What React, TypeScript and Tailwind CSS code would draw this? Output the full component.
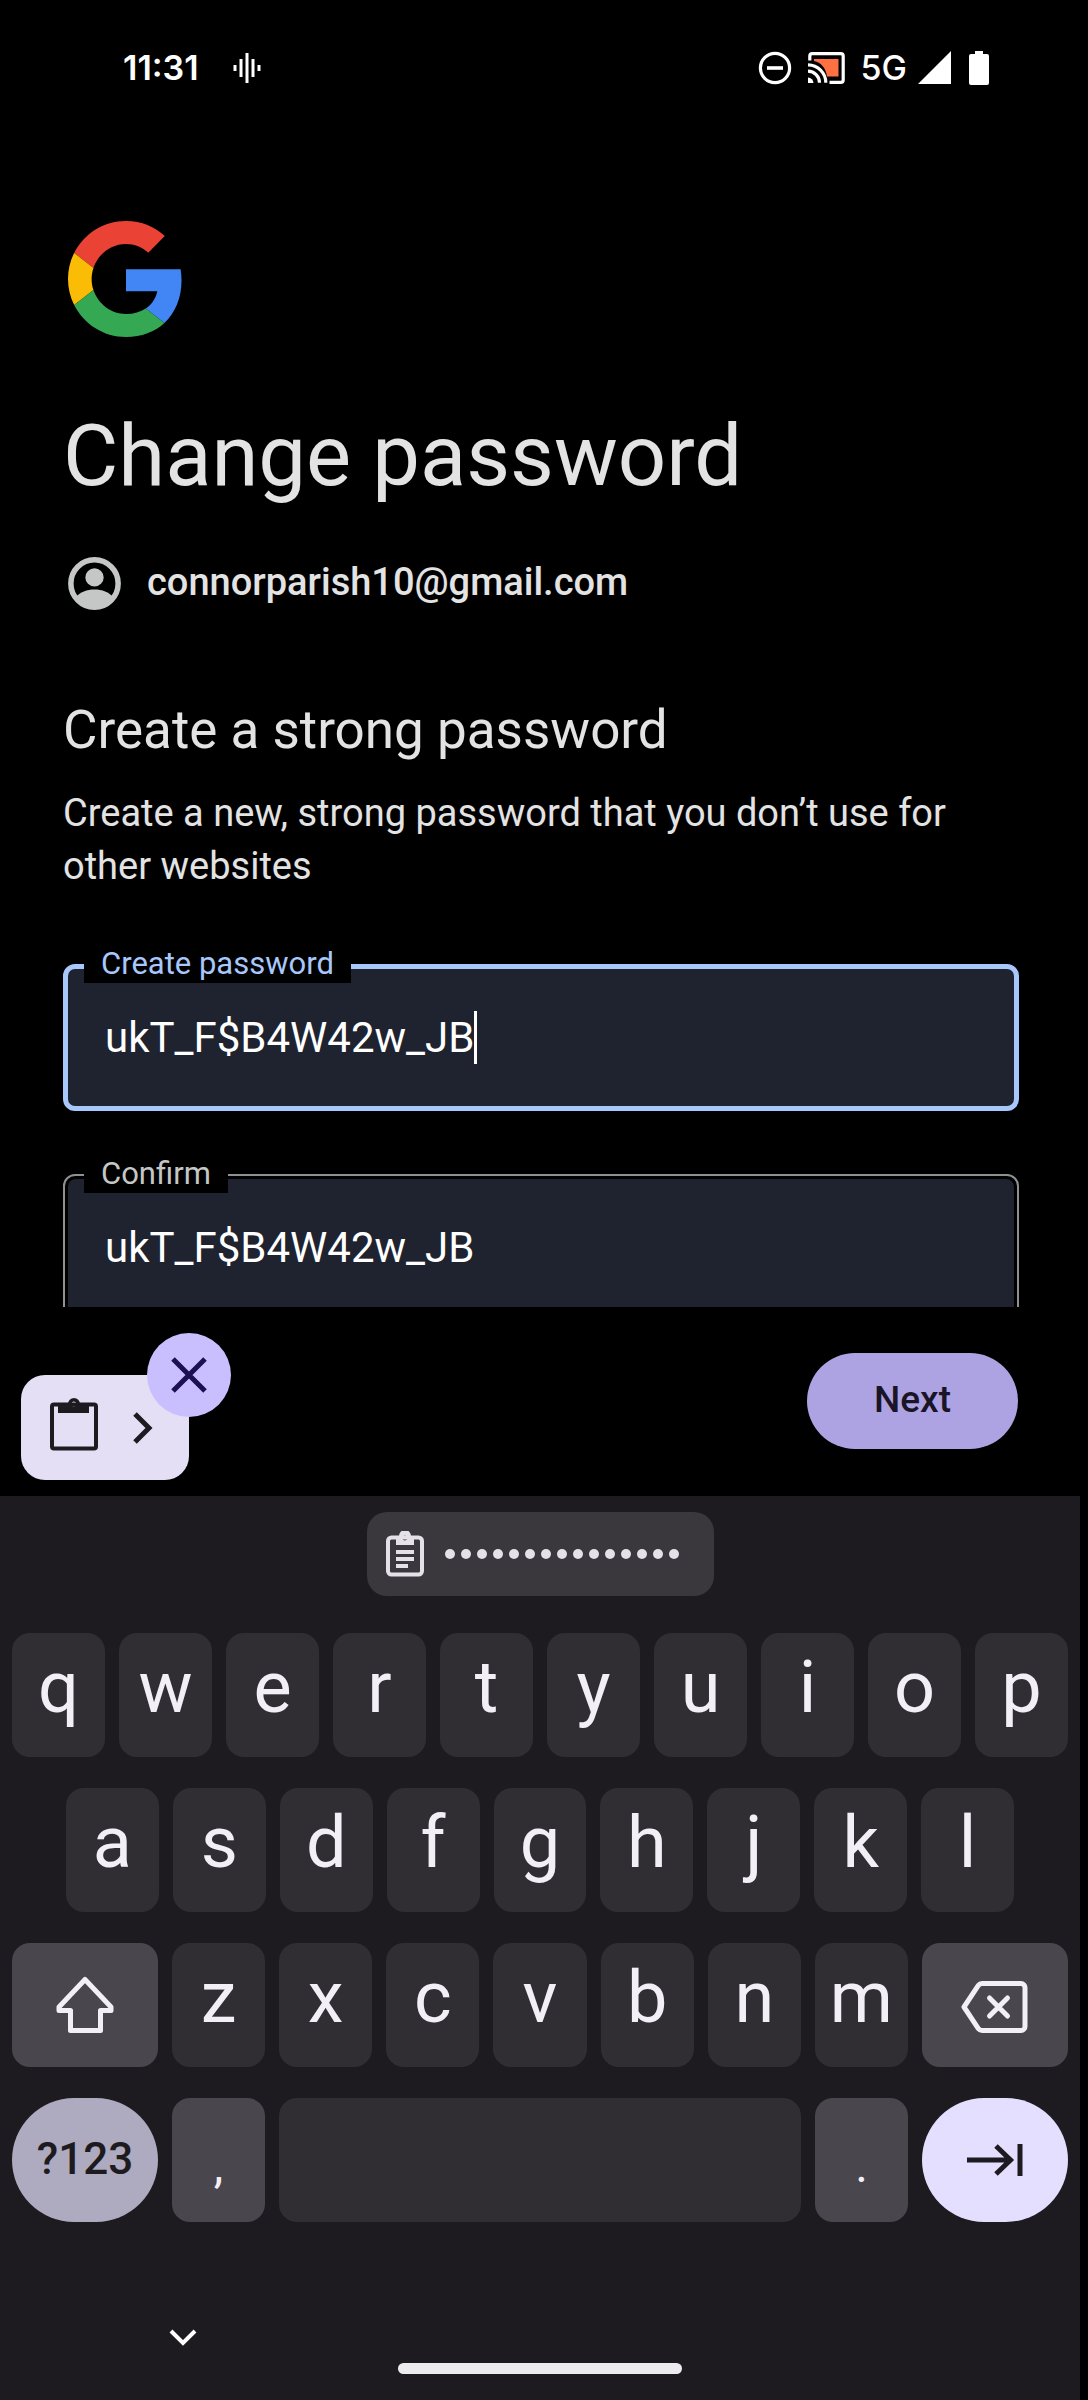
import { useState, type ReactNode } from "react";

function StatusBar() {
  return (
    <header className="flex h-[136px] shrink-0 items-center justify-between pl-[123px] pr-[99px] font-[Inter,sans-serif]">
      <div className="flex items-center gap-[34px]">
        <time className="text-[34px] leading-[40px] font-semibold">11:31</time>
        <svg className="h-[32px] w-[28px]" viewBox="0 0 28 32" stroke="#fff" strokeWidth="3" aria-hidden="true">
          <path d="M2 13v6M8 7v18M14 1v30M20 7v18M26 13v6" />
        </svg>
      </div>
      <div className="flex items-center">
        <svg className="h-[34px] w-[34px]" viewBox="0 0 34 34" fill="none" stroke="#fff" aria-label="Do not disturb">
          <circle cx="17" cy="17" r="14.6" strokeWidth="3.2" />
          <path d="M9 17h16" strokeWidth="3.6" />
        </svg>
        <svg className="ml-[16px] h-[32px] w-[37px]" viewBox="0 0 37 32" fill="none" stroke="#fff" aria-label="Casting">
          <path d="M6 7h24.500v17.500H19C18 16 13 10.500 6 9z" fill="#ff7043" stroke="none" />
          <path d="M1.800 8.500V4a2.400 2.400 0 0 1 2.400-2.400h28.600A2.400 2.400 0 0 1 35.200 4v24a2.400 2.400 0 0 1-2.400 2.400H21.500" strokeWidth="3.200" />
          <path d="M0 12.800a18 18 0 0 1 17.800 18M0 19.200a11.600 11.600 0 0 1 11.500 11.600" strokeWidth="3.200" />
          <path d="M0 25.500a5.600 5.600 0 0 1 5.500 5.500H0z" fill="#fff" stroke="none" />
        </svg>
        <span className="ml-[16px] text-[34px] leading-[40px] font-medium">5G</span>
        <svg className="ml-[11px] h-[34px] w-[33px]" viewBox="0 0 33 34" fill="#fff" aria-label="Signal">
          <path d="M33 0v33H0z" />
        </svg>
        <svg className="ml-[18px] h-[34px] w-[20px]" viewBox="0 0 20 34" fill="#fff" aria-label="Battery full">
          <path d="M6 0h8v3h4a2 2 0 0 1 2 2v27a2 2 0 0 1-2 2H2a2 2 0 0 1-2-2V5a2 2 0 0 1 2-2h4z" />
        </svg>
      </div>
    </header>
  );
}

function GoogleLogo() {
  return (
    <svg className="ml-[5px] h-[116px] w-[116px]" viewBox="0 0 48 48" aria-label="Google">
      <path fill="#EA4335" d="M24 9.500c3.540 0 6.710 1.220 9.210 3.600l6.850-6.850C35.900 2.380 30.470 0 24 0 14.620 0 6.510 5.380 2.560 13.220l7.980 6.190C12.430 13.720 17.740 9.500 24 9.500z" />
      <path fill="#4285F4" d="M46.980 24.550c0-1.570-.15-3.090-.38-4.550H24v9.020h12.940c-.58 2.960-2.260 5.480-4.780 7.180l7.730 6c4.510-4.180 7.090-10.360 7.090-17.650z" />
      <path fill="#FBBC05" d="M10.530 28.590c-.48-1.450-.76-2.990-.76-4.590s.27-3.140.76-4.590l-7.980-6.190C.92 16.460 0 20.120 0 24c0 3.880.92 7.540 2.560 10.780l7.970-6.190z" />
      <path fill="#34A853" d="M24 48c6.480 0 11.930-2.130 15.890-5.810l-7.730-6c-2.150 1.450-4.920 2.300-8.160 2.300-6.260 0-11.570-4.220-13.470-9.910l-7.980 6.190C6.510 42.620 14.620 48 24 48z" />
    </svg>
  );
}

const INPUT =
  "max-w-full bg-transparent p-0 text-[42px] leading-[52px] text-white outline-none [field-sizing:content]";
const LABEL = "absolute top-[-20px] left-[21px] bg-black px-[17px] text-[31px] leading-[39px]";
const WIDE = "flex h-[124px] w-[146px] shrink-0 items-center justify-center";
const PUNCT =
  "flex h-[124px] w-[93px] shrink-0 items-center justify-center rounded-[18px] bg-[#49464d] pt-[12px] text-[48px] leading-none";

function Row({ keys, before, after }: { keys: string; before?: ReactNode; after?: ReactNode }) {
  return (
    <div className="flex gap-[14px]">
      {before}
      {keys.split("").map((k) => (
        <button key={k} className="flex h-[124px] min-w-0 flex-1 items-center justify-center rounded-[18px] bg-[#302e33] pb-[14px] text-[72px] leading-none">
          {k}
        </button>
      ))}
      {after}
    </div>
  );
}

function Keyboard() {
  return (
    <section aria-label="Keyboard" className="mr-2 flex shrink-0 flex-col bg-[#1d1b20] text-[#f3eff6]">
      <button className="mx-auto mt-4 mb-[37px] flex h-[84px] items-center rounded-[20px] bg-[#3a383d] pr-[35px] pl-[19px]" aria-label="Paste password">
        <svg className="h-[46px] w-[38px]" viewBox="0 0 38 46" fill="none" stroke="#e6e1e9" aria-hidden="true">
          <rect x="2" y="6.500" width="34" height="37" rx="3.500" strokeWidth="4" />
          <path fill="#e6e1e9" fillRule="evenodd" stroke="none" d="M10 5h3a6 6 0 0 1 12 0h3v9H10zM19 4.500a2.500 2.500 0 1 0 0 5 2.500 2.500 0 0 0 0-5z" />
          <path d="M10 21h18M10 28h18M10 35h12" strokeWidth="4" />
        </svg>
        <span className="ml-[21px] flex gap-[6px]">
          {Array.from({ length: 15 }, (_, i) => (
            <span key={i} className="size-[10px] rounded-full bg-[#e6e1e9]" />
          ))}
        </span>
      </button>

      <div className="flex flex-col gap-[31px] px-3">
        <Row keys="qwertyuiop" />
        <div className="px-[54px]">
          <Row keys="asdfghjkl" />
        </div>
        <Row
          keys="zxcvbnm"
          before={
            <button aria-label="Shift" className={`${WIDE} rounded-[18px] bg-[#49464d]`}>
              <svg className="h-[60px] w-[60px]" viewBox="0 0 60 60" fill="none" stroke="#f3eff6" strokeWidth="5" strokeLinejoin="round" aria-hidden="true">
                <path d="M30 4.500L56 32V35.500H45.500V55.500H15.500V35.500H4V32z" />
              </svg>
            </button>
          }
          after={
            <button aria-label="Backspace" className={`${WIDE} rounded-[18px] bg-[#49464d] pt-1`}>
              <svg className="h-[54px] w-[68px]" viewBox="0 0 68 54" fill="none" stroke="#f3eff6" strokeWidth="5" strokeLinejoin="round" strokeLinecap="round" aria-hidden="true">
                <path d="M3 27L17.500 5.200Q18.800 3.500 21 3.500H60a4 4 0 0 1 4 4v39a4 4 0 0 1-4 4H21Q18.800 50.500 17.500 48.800z" />
                <path d="M28.500 18l18 18M46.500 18l-18 18" />
              </svg>
            </button>
          }
        />
        <div className="flex gap-[14px]">
          <button className={`${WIDE} rounded-full bg-[#aeaabf] pb-[2px] text-[44px] font-medium text-[#1d1b20]`}>?123</button>
          <button className={PUNCT}>,</button>
          <button aria-label="Space" className="h-[124px] flex-1 rounded-[18px] bg-[#302e33]" />
          <button className={PUNCT}>.</button>
          <button aria-label="Next field" className={`${WIDE} rounded-full bg-[#e4deff]`}>
            <svg className="h-[36px] w-[58px]" viewBox="0 0 58 36" fill="none" stroke="#1d1b20" strokeWidth="5" aria-hidden="true">
              <path d="M1 18h45M30 4l14.500 14L30 32M54 2v32" />
            </svg>
          </button>
        </div>
      </div>

      <button aria-label="Hide keyboard" className="mt-[103px] ml-[166px] flex h-[26px] w-[34px] items-center justify-center">
        <svg className="h-[18px] w-[28px]" viewBox="0 0 28 18" fill="none" stroke="#fff" strokeWidth="4" aria-hidden="true">
          <path d="M2 2l12 12L26 2" />
        </svg>
      </button>
      <div className="mx-auto mt-[12px] mb-[26px] h-[11px] w-[284px] rounded-full bg-[#ececee]" />
    </section>
  );
}

export default function App() {
  const [password, setPassword] = useState("ukT_F$B4W42w_JB");
  const [confirm, setConfirm] = useState("ukT_F$B4W42w_JB");
  return (
    <div className="flex h-screen flex-col overflow-hidden bg-black font-[Roboto,sans-serif] text-white">
      <StatusBar />
      <main className="min-h-0 flex-1 overflow-hidden pt-[85px] pr-[69px] pl-[63px] text-[#e3e3e3]">
        <GoogleLogo />
        <h1 className="mt-[71px] text-[85px] leading-[96px]">Change password</h1>
        <div className="mt-[53px] flex h-[53px] items-center gap-[26px] pl-[5px]">
          <svg className="h-[53px] w-[53px]" viewBox="0 0 52 52" aria-hidden="true">
            <circle cx="26" cy="26" r="23.200" fill="none" stroke="#c4c7c5" strokeWidth="5.400" />
            <circle cx="26" cy="20" r="9" fill="#c4c7c5" />
            <path d="M7 40c5-5.500 11.500-8 19-8s14 2.500 19 8c-4 6-11 9.500-19 9.500S11 46 7 40z" fill="#c4c7c5" />
          </svg>
          <span className="pb-1 text-[38px] leading-[48px] font-medium">connorparish10@gmail.com</span>
        </div>
        <h2 className="mt-[88px] text-[53px] leading-[64px]">Create a strong password</h2>
        <p className="mt-[25px] text-[38px] leading-[53px]">
          Create a new, strong password that you don’t use for other websites
        </p>

        <div className="relative mt-[71px] flex h-[147px] items-center rounded-[12px] border-[5px] border-[#a8c7fa] bg-[#1e232f] pl-[37px]">
          <input id="new-password" className={INPUT} value={password} onChange={(e) => setPassword(e.target.value)} />
          <span className="h-[53px] w-[3px] bg-white" />
          <label htmlFor="new-password" className={`${LABEL} -mt-[5px] -ml-[5px] text-[#a8c7fa]`}>
            Create password
          </label>
        </div>

        <div className="relative mt-[63px] rounded-[12px] border-2 border-[#8e918f] p-[3px]">
          <div className="flex h-[137px] items-center rounded-[8px] bg-[#1e232f] pl-[37px]">
            <input id="confirm-password" className={INPUT} value={confirm} onChange={(e) => setConfirm(e.target.value)} />
          </div>
          <label htmlFor="confirm-password" className={`${LABEL} -mt-[2px] -ml-[2px] text-[#c4c7c5]`}>
            Confirm
          </label>
        </div>
      </main>

      <footer className="flex h-[189px] shrink-0 items-end justify-between pr-[70px] pl-[21px]">
        <div className="relative mb-4">
          <button aria-label="Clipboard suggestions" className="flex h-[105px] w-[168px] items-center rounded-[24px] bg-[#e5dff6] pl-[29px]">
            <svg className="mb-[8px] h-[54px] w-[48px]" viewBox="0 0 48 54" fill="none" stroke="#1d1b20" aria-hidden="true">
              <rect x="2" y="7.500" width="44" height="44" rx="2" strokeWidth="4" />
              <path fill="#1d1b20" fillRule="evenodd" stroke="none" d="M8 7h10a6 6 0 0 1 12 0h9v9H8zM24 4.500a2.500 2.500 0 1 0 0 5 2.500 2.500 0 0 0 0-5z" />
            </svg>
            <svg className="ml-[34px] h-[34px] w-[22px]" viewBox="0 0 22 34" fill="none" stroke="#1d1b20" strokeWidth="5" aria-hidden="true">
              <path d="M3 3l14 14L3 31" />
            </svg>
          </button>
          <button aria-label="Dismiss" className="absolute -top-[42px] -right-[42px] flex size-[84px] items-center justify-center rounded-full bg-[#c9bfff]">
            <svg className="size-[36px]" viewBox="0 0 36 36" stroke="#1c0f52" strokeWidth="5" aria-hidden="true">
              <path d="M2 2l32 32M34 2L2 34" />
            </svg>
          </button>
        </div>
        <button className="mb-[47px] h-[96px] w-[211px] rounded-full bg-[#aea3e2] pb-[2px] text-[37px] font-medium text-[#1a1427]">Next</button>
      </footer>

      <Keyboard />
    </div>
  );
}
